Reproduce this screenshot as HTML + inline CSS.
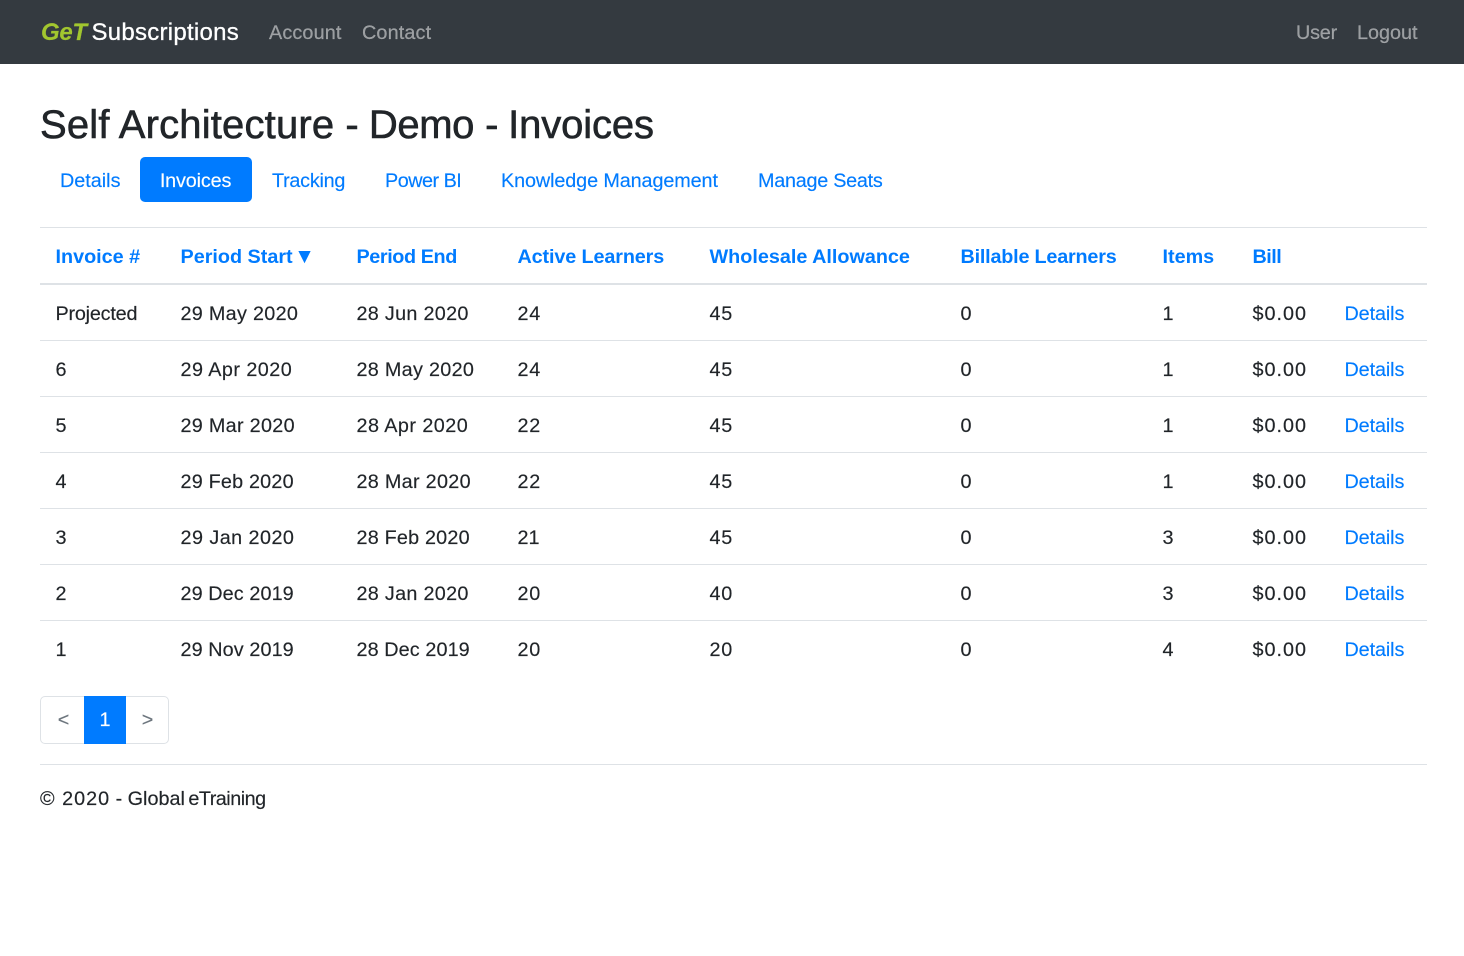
<!DOCTYPE html>
<html lang="en"><head><meta charset="utf-8"><title>Invoices</title>
<style>
*{box-sizing:border-box}
html,body{margin:0;padding:0;background:#fff}
body{width:1464px;height:956px;position:relative;overflow:hidden;font-family:"Liberation Sans",sans-serif;font-size:19.8px;color:#212529;-webkit-text-stroke:.15px}
a{text-decoration:none;color:#007bff}
nav{position:absolute;left:0;top:0;width:1464px;height:64px;background:#343a40}
nav a,nav span{position:absolute;white-space:nowrap}
.nl{top:21px;line-height:24px;color:rgba(255,255,255,.5);font-size:19.8px}
.brand{left:41px;top:18px;line-height:30px;font-size:24px;color:#fff}
.brand b{font-style:italic;color:#a2c62f;letter-spacing:-.3px}
.brand i{font-style:normal;position:static!important;margin-left:-2px;letter-spacing:.27px;-webkit-text-stroke:.3px}
h1{position:absolute;left:40px;top:101px;margin:0;line-height:48px;font-size:40px;font-weight:400;-webkit-text-stroke:.6px #212529;white-space:nowrap}
.pills a{position:absolute;top:158px;line-height:46px;white-space:nowrap}
.pills a.on{left:140px;top:157px;width:112px;height:45px;line-height:48px;padding-right:1px;background:#007bff;color:#fff;border-radius:5px;text-align:center;letter-spacing:-.15px}
table{position:absolute;left:40px;top:227px;width:1387px;table-layout:fixed;border-collapse:collapse}
th,td{padding:4px 0 0 15.5px;text-align:left;white-space:nowrap;font-weight:400;border-top:1px solid #dee2e6;height:56px}
th{font-weight:700;border-bottom:2px solid #dee2e6;height:56px;padding-top:3px;-webkit-text-stroke:0}
th a{line-height:24px}
th u{text-decoration:none;margin-left:-4px;font-size:21px;line-height:0;vertical-align:0}
tr.f td{border-top:0;height:57px;padding-top:4px}
td a{letter-spacing:-.1px}
.a{letter-spacing:.1px}.b{letter-spacing:.2px}.c{letter-spacing:.3px}.d{letter-spacing:.45px}.n{letter-spacing:.7px}.m{letter-spacing:1px}
.pg{position:absolute;left:40px;top:696px;width:129px;height:48px;border:1px solid #dee2e6;border-radius:5px}
.pg a{position:absolute;top:-1px;height:48px;line-height:49px;text-align:center;color:#6c757d}
.pg a.on{left:43px;width:42px;background:#007bff;color:#fff}
hr{position:absolute;left:40px;top:764px;width:1387px;margin:0;border:0;border-top:1px solid #dee2e6}
footer{position:absolute;left:40px;top:787px;line-height:24px;white-space:nowrap}
</style></head><body>
<nav>
<a class="brand" href="#"><b>GeT</b> <i>Subscriptions</i></a>
<a class="nl" style="left:269px;letter-spacing:.15px" href="#">Account</a>
<a class="nl" style="left:362px;letter-spacing:.15px" href="#">Contact</a>
<a class="nl" style="left:1296px;letter-spacing:-.2px" href="#">User</a>
<a class="nl" style="left:1357px" href="#">Logout</a>
</nav>
<h1><span style="letter-spacing:.18px">Self Architecture</span> - <span style="margin-left:-1px;letter-spacing:-.4px">Demo</span> - <span style="margin-left:-1.4px;letter-spacing:-.12px">Invoices</span></h1>
<div class="pills">
<a style="left:60px" href="#">Details</a>
<a class="on" href="#">Invoices</a>
<a style="left:272px;letter-spacing:-.25px" href="#">Tracking</a>
<a style="left:385px;letter-spacing:-.5px" href="#">Power BI</a>
<a style="left:501px;letter-spacing:-.1px" href="#">Knowledge Management</a>
<a style="left:758px;letter-spacing:-.25px" href="#">Manage Seats</a>
</div>
<table>
<colgroup><col style="width:125px"><col style="width:176px"><col style="width:161px"><col style="width:192px"><col style="width:251px"><col style="width:202px"><col style="width:90px"><col style="width:92px"><col style="width:98px"></colgroup>
<thead><tr><th><a href="#">Invoice #</a></th><th><a href="#">Period Start <u>▼</u></a></th><th><a href="#" style="letter-spacing:-.4px">Period End</a></th><th><a href="#" style="letter-spacing:-.12px">Active Learners</a></th><th><a href="#">Wholesale Allowance</a></th><th><a href="#" style="letter-spacing:-.2px">Billable Learners</a></th><th><a href="#">Items</a></th><th><a href="#" style="letter-spacing:-.5px">Bill</a></th><th></th></tr></thead>
<tbody>
<tr class="f"><td style="letter-spacing:-.2px">Projected</td><td class="c">29 May 2020</td><td class="c">28 Jun 2020</td><td class="n">24</td><td class="n">45</td><td>0</td><td>1</td><td class="m">$0.00</td><td><a href="#">Details</a></td></tr>
<tr><td>6</td><td class="d">29 Apr 2020</td><td class="c">28 May 2020</td><td class="n">24</td><td class="n">45</td><td>0</td><td>1</td><td class="m">$0.00</td><td><a href="#">Details</a></td></tr>
<tr><td>5</td><td class="c">29 Mar 2020</td><td class="d">28 Apr 2020</td><td class="n">22</td><td class="n">45</td><td>0</td><td>1</td><td class="m">$0.00</td><td><a href="#">Details</a></td></tr>
<tr><td>4</td><td class="b">29 Feb 2020</td><td class="c">28 Mar 2020</td><td class="n">22</td><td class="n">45</td><td>0</td><td>1</td><td class="m">$0.00</td><td><a href="#">Details</a></td></tr>
<tr><td>3</td><td class="d">29 Jan 2020</td><td class="b">28 Feb 2020</td><td>21</td><td class="n">45</td><td>0</td><td>3</td><td class="m">$0.00</td><td><a href="#">Details</a></td></tr>
<tr><td>2</td><td class="a">29 Dec 2019</td><td class="c">28 Jan 2020</td><td class="n">20</td><td class="n">40</td><td>0</td><td>3</td><td class="m">$0.00</td><td><a href="#">Details</a></td></tr>
<tr><td>1</td><td class="a">29 Nov 2019</td><td class="a">28 Dec 2019</td><td class="n">20</td><td class="n">20</td><td>0</td><td>4</td><td class="m">$0.00</td><td><a href="#">Details</a></td></tr>
</tbody></table>
<div class="pg">
<a style="left:1px;width:43px" href="#">&lt;</a>
<a class="on" href="#">1</a>
<a style="left:85px;width:43px" href="#">&gt;</a>
</div>
<hr>
<footer>© <span style="margin-left:2px;letter-spacing:1px">2020</span> - Global <span style="margin-left:-2px;letter-spacing:-.5px">eTraining</span></footer>
</body></html>
